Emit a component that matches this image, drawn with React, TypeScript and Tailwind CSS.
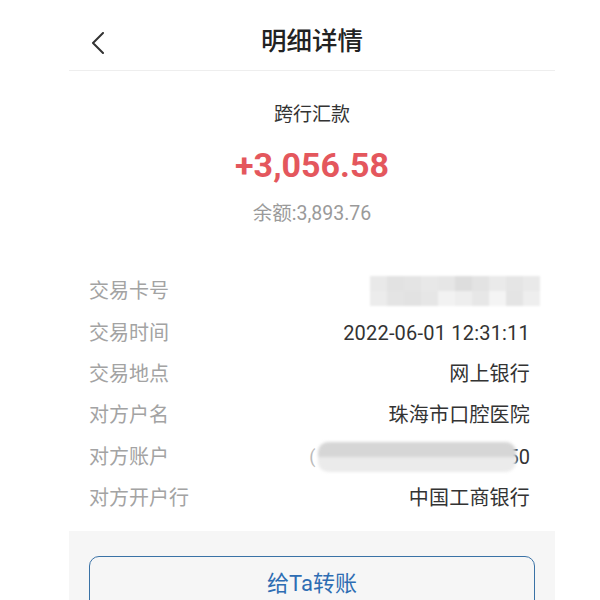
import React from "react";

const font = { fontFamily: 'Roboto, "Noto Sans CJK SC", sans-serif' };

const rows: { label: string; value: React.ReactNode }[] = [
  { label: "交易卡号", value: "card" },
  { label: "交易时间", value: "2022-06-01 12:31:11" },
  { label: "交易地点", value: "网上银行" },
  { label: "对方户名", value: "珠海市口腔医院" },
  { label: "对方账户", value: "acct" },
  { label: "对方开户行", value: "中国工商银行" },
];

const cardShades = [
  ["#e9e9e9", "#e2e2e2", "#e4e4e4", "#e8e8e8", "#e6e6e6", "#dddddd", "#e3e3e3", "#eaeaea", "#e5e5e5", "#e9e9e9"],
  ["#ececec", "#e4e4e4", "#e2e2e2", "#e6e6e6", "#f2f2f2", "#eeeeee", "#e7e7e7", "#f4f4f4", "#e4e4e4", "#eeeeee"],
];

function CardMosaic() {
  return (
    <div className="flex flex-col mr-[-10px] blur-[1px]">
      {cardShades.map((r, i) => (
        <div key={i} className="flex">
          {r.map((c, j) => (
            <div key={j} className="w-[17px] h-[15px]" style={{ backgroundColor: c }} />
          ))}
        </div>
      ))}
    </div>
  );
}

function AcctMosaic() {
  return (
    <div className="flex items-center">
      <span className="text-[#bbbbbb] text-[18px] leading-none mr-[2px]">(</span>
      <div className="flex flex-col w-[198px] rounded-[10px] overflow-hidden blur-[1.5px] mr-[-8px] relative z-10">
        <div className="h-[15px] bg-[#d6d6d6]" />
        <div className="h-[15px] bg-[#ebebeb]" />
      </div>
      <span className="text-[#333333]">50</span>
    </div>
  );
}

export default function App() {
  return (
    <div className="w-[600px] h-[600px] bg-white overflow-hidden" style={font}>
      <div className="ml-[69px] w-[486px]">
        <div className="relative h-[71px] pt-[14px] flex items-center justify-center border-b border-[#eeeeee]">
          <svg className="absolute left-[22px] top-[32px]" width="14" height="22" viewBox="0 0 14 22">
            <path d="M12 1 L2 11 L12 21" fill="none" stroke="#333" strokeWidth="2" strokeLinecap="round" strokeLinejoin="round" />
          </svg>
          <span className="text-[25.5px] font-medium text-[#222222] leading-none">明细详情</span>
        </div>

        <div className="flex flex-col items-center">
          <div className="mt-[34px] text-[19px] text-[#333333] leading-none">跨行汇款</div>
          <div className="mt-[24px] text-[34px] font-bold text-[#e4575d] leading-none">+3,056.58</div>
          <div className="mt-[22px] text-[19.5px] text-[#9a9a9a] leading-none">余额:3,893.76</div>
        </div>

        <div className="mt-[47px] flex flex-col pl-[20px] pr-[25px]">
          {rows.map((r) => (
            <div key={r.label} className="h-[41.4px] flex items-center justify-between text-[20px] leading-none">
              <span className="text-[#a3a3a3]">{r.label}</span>
              {r.value === "card" ? (
                <CardMosaic />
              ) : r.value === "acct" ? (
                <AcctMosaic />
              ) : (
                <span className="text-[#333333] tracking-[0.2px]">{r.value}</span>
              )}
            </div>
          ))}
        </div>

        <div className="mt-[12px] bg-[#f6f6f6] pt-[25px] px-[20px] h-[80px]">
          <div className="h-[60px] rounded-[10px] border-[1.5px] border-[#3a72a6] flex items-start justify-center pt-[16px]">
            <span className="text-[22px] text-[#2e6db3] leading-none">给Ta转账</span>
          </div>
        </div>
      </div>
    </div>
  );
}
